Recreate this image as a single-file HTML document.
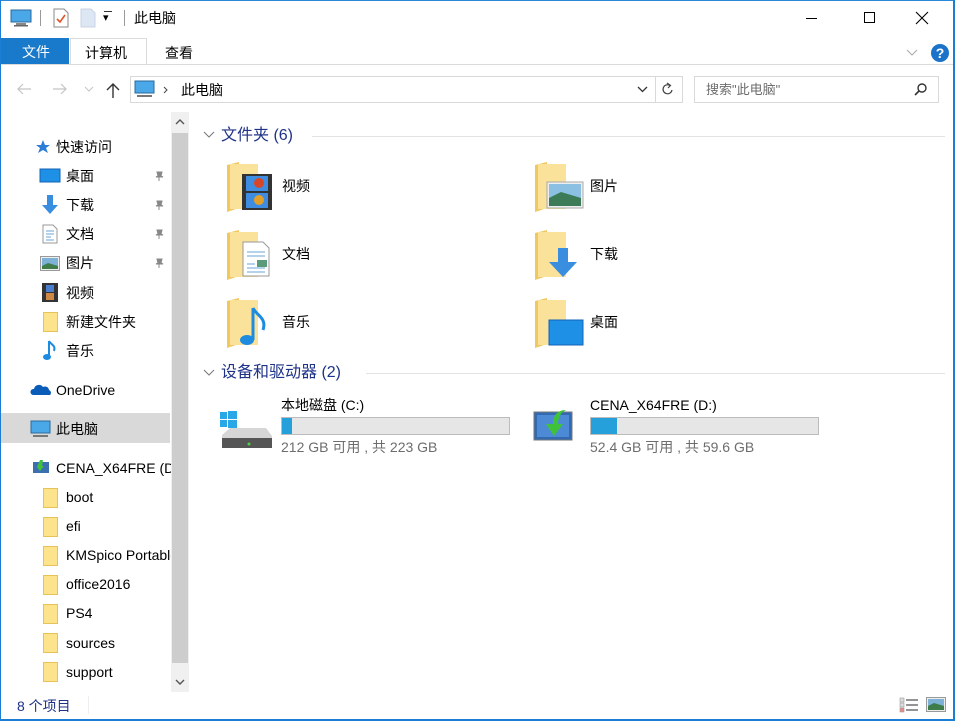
<!DOCTYPE html>
<html><head><meta charset="utf-8">
<style>
*{margin:0;padding:0;box-sizing:border-box}
html,body{width:955px;height:721px;overflow:hidden;background:#fff;font-family:"Liberation Sans","Noto Sans CJK SC",sans-serif;color:#000}
.a{position:absolute}
.t{font-size:14px;line-height:18px;white-space:nowrap}
.nav .t{font-size:14px}
.pin{width:10px;height:10px}
</style></head><body>
<div class="a" style="left:0;top:0;width:955px;height:721px;border:1px solid #2b88d8"></div>
<div class="a" style="left:0;top:0;width:1px;height:721px;background:#1a7fd4"></div>
<div class="a" style="left:0;top:719px;width:955px;height:2px;background:#1a7fd4"></div>
<div class="a" style="left:953px;top:0;width:2px;height:721px;background:#1a7fd4"></div>

<svg class="a" style="left:10px;top:9px" width="22" height="18"><rect x="1" y="1" width="20" height="12" fill="#4aa8e8" stroke="#2a6a9c"/><rect x="6" y="14" width="10" height="2" fill="#888"/><rect x="4" y="16" width="14" height="1.5" fill="#666"/></svg>
<div class="a" style="left:40px;top:10px;width:1px;height:16px;background:#999"></div>
<svg class="a" style="left:53px;top:8px" width="16" height="20"><path d="M1 1h10l4 4v14H1z" fill="#fff" stroke="#888"/><path d="M4 11l3 3 5-7" fill="none" stroke="#e2532a" stroke-width="1.6"/></svg>
<svg class="a" style="left:80px;top:8px" width="16" height="20"><path d="M1 1h10l4 4v14H1z" fill="#dde6f3" stroke="#c8d3e4"/></svg>
<div class="a t" style="left:103px;top:9px;font-size:11px">▾</div>
<div class="a" style="left:104px;top:11px;width:8px;height:1px;background:#333"></div>
<div class="a" style="left:124px;top:10px;width:1px;height:16px;background:#999"></div>
<div class="a t" style="left:134px;top:9px">此电脑</div>
<div class="a" style="left:806px;top:18px;width:11px;height:1px;background:#000"></div>
<div class="a" style="left:864px;top:12px;width:11px;height:11px;border:1px solid #000"></div>
<svg class="a" style="left:915px;top:11px" width="14" height="14"><path d="M1 1L13 13M13 1L1 13" stroke="#000" stroke-width="1.1"/></svg>

<div class="a" style="left:1px;top:38px;width:68px;height:26px;background:#1979ca"></div>
<div class="a t" style="left:22px;top:43px;color:#fff">文件</div>
<div class="a" style="left:70px;top:38px;width:77px;height:27px;border:1px solid #dadbdc;border-bottom:none;background:#fff"></div>
<div class="a t" style="left:85px;top:44px">计算机</div>
<div class="a t" style="left:165px;top:44px">查看</div>
<div class="a" style="left:1px;top:64px;width:952px;height:1px;background:#dadbdc"></div>
<svg class="a" style="left:906px;top:49px" width="12" height="8"><path d="M1 1l5 5 5-5" fill="none" stroke="#aaa"/></svg>
<div class="a" style="left:931px;top:44px;width:18px;height:18px;border-radius:50%;background:#1a73c8;color:#fff;font-weight:bold;font-size:14px;text-align:center;line-height:18px">?</div>

<svg class="a" style="left:16px;top:82px" width="16" height="14"><path d="M15 7H2M7 2L2 7l5 5" fill="none" stroke="#c4c4c4" stroke-width="1.2"/></svg>
<svg class="a" style="left:52px;top:82px" width="16" height="14"><path d="M1 7h13M9 2l5 5-5 5" fill="none" stroke="#c4c4c4" stroke-width="1.2"/></svg>
<svg class="a" style="left:84px;top:86px" width="10" height="6"><path d="M1 1l4 4 4-4" fill="none" stroke="#c4c4c4"/></svg>
<svg class="a" style="left:106px;top:82px" width="14" height="16"><path d="M7 16V2M1 8l6-6 6 6" fill="none" stroke="#333" stroke-width="1.4"/></svg>
<div class="a" style="left:130px;top:76px;width:553px;height:27px;border:1px solid #d9d9d9"></div>
<div class="a" style="left:655px;top:77px;width:1px;height:25px;background:#d9d9d9"></div>
<svg class="a" style="left:134px;top:80px" width="22" height="18"><rect x="1" y="1" width="19" height="12" fill="#4aa8e8" stroke="#2a6a9c"/><rect x="3" y="15" width="15" height="2" fill="#777"/></svg>
<svg class="a" style="left:163px;top:86px" width="6" height="8"><path d="M1 1l3 3-3 3" fill="none" stroke="#444"/></svg>
<div class="a t" style="left:181px;top:81px">此电脑</div>
<svg class="a" style="left:637px;top:86px" width="11" height="7"><path d="M1 1l4.5 4.5L10 1" fill="none" stroke="#333" stroke-width="1.3"/></svg>
<svg class="a" style="left:661px;top:81px" width="14" height="16"><path d="M11 9a4.5 4.5 0 1 1-2-4.5" fill="none" stroke="#444" stroke-width="1.2"/><path d="M6 2l3.5 2.5L7 7" fill="none" stroke="#444" stroke-width="1.2"/></svg>
<div class="a" style="left:694px;top:76px;width:245px;height:27px;border:1px solid #d9d9d9"></div>
<div class="a t" style="left:706px;top:81px;color:#6d6d6d;font-size:13px">搜索"此电脑"</div>
<svg class="a" style="left:914px;top:82px" width="14" height="14"><circle cx="8" cy="6" r="4" fill="none" stroke="#333" stroke-width="1.4"/><path d="M5 9L1 13" stroke="#333" stroke-width="1.6"/></svg>

<div class="a" style="left:1px;top:413px;width:169px;height:30px;background:#d9d9d9"></div>
<div class="a" style="left:171px;top:112px;width:18px;height:580px;background:#f0f0f0"></div>
<div class="a" style="left:172px;top:133px;width:16px;height:530px;background:#cdcdcd"></div>
<svg class="a" style="left:175px;top:119px" width="10" height="6"><path d="M1 5l4-4 4 4" fill="none" stroke="#555" stroke-width="1.4"/></svg>
<svg class="a" style="left:175px;top:679px" width="10" height="6"><path d="M1 1l4 4 4-4" fill="none" stroke="#555" stroke-width="1.4"/></svg>

<div class="nav">
<svg class="a" style="left:33px;top:139px" width="18" height="16"><path d="M10 1l2 5h5l-4 3 2 5-5-3-5 3 2-5-4-3h5z" fill="#2b7dd6"/></svg>
<div class="a t" style="left:56px;top:138px">快速访问</div>
<svg class="a" style="left:39px;top:168px" width="22" height="16"><rect x="1" y="1" width="20" height="13" fill="#1e90e6" stroke="#1363b5"/></svg>
<div class="a t" style="left:66px;top:167px">桌面</div>
<svg class="a" style="left:40px;top:194px" width="20" height="22"><path d="M7 1h6v10h5l-8 9-8-9h5z" fill="#3a8ee0"/></svg>
<div class="a t" style="left:66px;top:196px">下载</div>
<svg class="a" style="left:42px;top:224px" width="16" height="20"><path d="M1 1h10l4 4v14H1z" fill="#fff" stroke="#999"/><path d="M4 7h8M4 10h8M4 13h5M4 16h8" stroke="#6aa6d8"/></svg>
<div class="a t" style="left:66px;top:225px">文档</div>
<svg class="a" style="left:40px;top:256px" width="20" height="16"><rect x="0.5" y="0.5" width="19" height="14" fill="#eee" stroke="#999"/><rect x="2" y="2" width="16" height="11" fill="#7eb1d6"/><path d="M2 10l6-3 10 3v3H2z" fill="#3f7c4a"/></svg>
<div class="a t" style="left:66px;top:254px">图片</div>
<svg class="a" style="left:42px;top:283px" width="16" height="19"><rect x="0" y="0" width="16" height="19" fill="#333"/><rect x="4" y="2" width="8" height="7" fill="#4a7fd0"/><rect x="4" y="10" width="8" height="7" fill="#c84"/></svg>
<div class="a t" style="left:66px;top:284px">视频</div>
<div class="a" style="left:43px;top:312px;width:15px;height:20px;background:#fde38c;border:1px solid #e6c25a"></div>
<div class="a t" style="left:66px;top:313px">新建文件夹</div>
<svg class="a" style="left:43px;top:340px" width="14" height="22"><path d="M6 1v15" stroke="#1d8ce0" stroke-width="2"/><ellipse cx="4" cy="17" rx="4" ry="3" fill="#1d8ce0"/><path d="M6 1c2 4 7 4 5 10" fill="none" stroke="#1d8ce0" stroke-width="2"/></svg>
<div class="a t" style="left:66px;top:342px">音乐</div>

<svg class="pin a" style="left:154px;top:171px"><path d="M3 1h5l-1 4 2 1H2l2-1zM5 6v4" fill="#888" stroke="#888"/></svg>
<svg class="pin a" style="left:154px;top:200px"><path d="M3 1h5l-1 4 2 1H2l2-1zM5 6v4" fill="#888" stroke="#888"/></svg>
<svg class="pin a" style="left:154px;top:229px"><path d="M3 1h5l-1 4 2 1H2l2-1zM5 6v4" fill="#888" stroke="#888"/></svg>
<svg class="pin a" style="left:154px;top:258px"><path d="M3 1h5l-1 4 2 1H2l2-1zM5 6v4" fill="#888" stroke="#888"/></svg>

<svg class="a" style="left:30px;top:382px" width="22" height="14"><path d="M3 13a3 3 0 0 1 1-6 5 5 0 0 1 9-2 4 4 0 0 1 6 3 3 3 0 0 1 1 5z" fill="#0b5cb8"/></svg>
<div class="a t" style="left:56px;top:381px">OneDrive</div>
<svg class="a" style="left:30px;top:420px" width="22" height="18"><rect x="1" y="1" width="19" height="12" fill="#4aa8e8" stroke="#2a6a9c"/><rect x="3" y="15" width="15" height="2" fill="#777"/></svg>
<div class="a t" style="left:56px;top:420px">此电脑</div>
<svg class="a" style="left:32px;top:458px" width="18" height="16"><rect x="1" y="4" width="16" height="11" fill="#3a6fb0"/><path d="M5 9l3 4 4-5-2 0 1-6-3 0z" fill="#3fc23a"/></svg>
<div class="a t" style="left:56px;top:459px;width:115px;overflow:hidden">CENA_X64FRE (D:)</div>
<div class="a" style="left:43px;top:488px;width:15px;height:20px;background:#fde38c;border:1px solid #e6c25a"></div><div class="a t" style="left:66px;top:488px">boot</div>
<div class="a" style="left:43px;top:517px;width:15px;height:20px;background:#fde38c;border:1px solid #e6c25a"></div><div class="a t" style="left:66px;top:517px">efi</div>
<div class="a" style="left:43px;top:546px;width:15px;height:20px;background:#fde38c;border:1px solid #e6c25a"></div><div class="a t" style="left:66px;top:546px;width:105px;overflow:hidden">KMSpico Portable</div>
<div class="a" style="left:43px;top:575px;width:15px;height:20px;background:#fde38c;border:1px solid #e6c25a"></div><div class="a t" style="left:66px;top:575px">office2016</div>
<div class="a" style="left:43px;top:604px;width:15px;height:20px;background:#fde38c;border:1px solid #e6c25a"></div><div class="a t" style="left:66px;top:604px">PS4</div>
<div class="a" style="left:43px;top:633px;width:15px;height:20px;background:#fde38c;border:1px solid #e6c25a"></div><div class="a t" style="left:66px;top:634px">sources</div>
<div class="a" style="left:43px;top:662px;width:15px;height:20px;background:#fde38c;border:1px solid #e6c25a"></div><div class="a t" style="left:66px;top:663px">support</div>
</div>

<svg class="a" style="left:203px;top:131px" width="12" height="8"><path d="M1 1l5 5 5-5" fill="none" stroke="#777"/></svg>
<div class="a t" style="left:221px;top:126px;font-size:16px;line-height:20px;color:#1e3287">文件夹 (6)</div>
<div class="a" style="left:312px;top:136px;width:633px;height:1px;background:#e3e3e3"></div>

<svg class="a" style="left:227px;top:162px" width="48" height="50"><path d="M0 3l12-3v46l-12 4z" fill="#f1c75f"/><path d="M3 2h28v45H3z" fill="#fbe29a"/><rect x="15" y="12" width="30" height="36" fill="#333"/><rect x="19" y="14" width="22" height="15" fill="#3f8de0"/><rect x="19" y="31" width="22" height="15" fill="#3f8de0"/><circle cx="32" cy="21" r="5" fill="#d8462a"/><circle cx="32" cy="38" r="5" fill="#e3a12a"/></svg>
<div class="a t" style="left:282px;top:177px">视频</div>
<svg class="a" style="left:535px;top:162px" width="50" height="50"><path d="M0 3l12-3v46l-12 4z" fill="#f1c75f"/><path d="M3 2h28v45H3z" fill="#fbe29a"/><rect x="12" y="20" width="36" height="26" fill="#eee" stroke="#aaa"/><rect x="14" y="22" width="32" height="22" fill="#8cc0e3"/><path d="M14 36l12-6 20 6v8H14z" fill="#3c7a58"/></svg>
<div class="a t" style="left:590px;top:177px">图片</div>
<svg class="a" style="left:227px;top:230px" width="48" height="50"><path d="M0 3l12-3v46l-12 4z" fill="#f1c75f"/><path d="M3 2h28v45H3z" fill="#fbe29a"/><path d="M16 12h20l6 6v28H16z" fill="#fff" stroke="#999"/><path d="M20 22h18M20 26h18M20 34h8M20 38h18M20 42h18" stroke="#6aa6d8"/><rect x="30" y="30" width="10" height="7" fill="#5a9b7c"/></svg>
<div class="a t" style="left:282px;top:245px">文档</div>
<svg class="a" style="left:535px;top:230px" width="50" height="50"><path d="M0 3l12-3v46l-12 4z" fill="#f1c75f"/><path d="M3 2h28v45H3z" fill="#fbe29a"/><path d="M23 18h10v14h9l-14 15-14-15h9z" fill="#3a8ee0"/></svg>
<div class="a t" style="left:590px;top:245px">下载</div>
<svg class="a" style="left:227px;top:298px" width="48" height="50"><path d="M0 3l12-3v46l-12 4z" fill="#f1c75f"/><path d="M3 2h28v45H3z" fill="#fbe29a"/><path d="M26 10v32" stroke="#1d8ce0" stroke-width="3"/><ellipse cx="20" cy="42" rx="7" ry="5" fill="#1d8ce0"/><path d="M26 10c4 8 14 10 10 22" fill="none" stroke="#1d8ce0" stroke-width="3"/></svg>
<div class="a t" style="left:282px;top:313px">音乐</div>
<svg class="a" style="left:535px;top:298px" width="50" height="50"><path d="M0 3l12-3v46l-12 4z" fill="#f1c75f"/><path d="M3 2h28v45H3z" fill="#fbe29a"/><rect x="14" y="22" width="34" height="25" fill="#1e90e6" stroke="#1363b5"/></svg>
<div class="a t" style="left:590px;top:313px">桌面</div>

<svg class="a" style="left:203px;top:369px" width="12" height="8"><path d="M1 1l5 5 5-5" fill="none" stroke="#777"/></svg>
<div class="a t" style="left:221px;top:363px;font-size:16px;line-height:20px;color:#1e3287">设备和驱动器 (2)</div>
<div class="a" style="left:366px;top:373px;width:579px;height:1px;background:#e3e3e3"></div>

<svg class="a" style="left:218px;top:410px" width="56" height="42"><rect x="2" y="2" width="7" height="7" fill="#2aa7e6"/><rect x="10" y="1" width="9" height="8" fill="#2aa7e6"/><rect x="2" y="10" width="7" height="7" fill="#2aa7e6"/><rect x="10" y="10" width="9" height="8" fill="#2aa7e6"/><path d="M4 25l8-7h36l6 8v12H4z" fill="#d6d6d6"/><path d="M4 28h50v10H4z" fill="#555"/><circle cx="31" cy="34" r="1.5" fill="#4ed04e"/></svg>
<div class="a t" style="left:281px;top:396px">本地磁盘 (C:)</div>
<div class="a" style="left:281px;top:417px;width:229px;height:18px;background:#e6e6e6;border:1px solid #bcbcbc"></div>
<div class="a" style="left:282px;top:418px;width:10px;height:16px;background:#26a0da"></div>
<div class="a t" style="left:281px;top:438px;color:#6d6d6d">212 GB 可用 , 共 223 GB</div>

<svg class="a" style="left:532px;top:402px" width="44" height="40"><rect x="2" y="10" width="38" height="28" fill="#3269b0" stroke="#777"/><rect x="5" y="13" width="32" height="22" fill="#4d8ad6"/><path d="M14 22l8 12 9-12h-5c0-8 4-12 8-14-7 0-13 4-13 14z" fill="#3fc23a"/></svg>
<div class="a t" style="left:590px;top:396px">CENA_X64FRE (D:)</div>
<div class="a" style="left:590px;top:417px;width:229px;height:18px;background:#e6e6e6;border:1px solid #bcbcbc"></div>
<div class="a" style="left:591px;top:418px;width:26px;height:16px;background:#26a0da"></div>
<div class="a t" style="left:590px;top:438px;color:#6d6d6d">52.4 GB 可用 , 共 59.6 GB</div>

<div class="a t" style="left:17px;top:697px;color:#1e3287;font-size:14px">8 个项目</div>
<div class="a" style="left:88px;top:696px;width:1px;height:18px;background:#eee"></div>
<svg class="a" style="left:899px;top:697px" width="20" height="16"><rect x="1" y="1" width="4" height="4" fill="#ddd" stroke="#999" stroke-width=".6"/><rect x="1" y="6" width="4" height="4" fill="#ddd" stroke="#999" stroke-width=".6"/><rect x="1" y="11" width="4" height="4" fill="#e88" stroke="#999" stroke-width=".6"/><path d="M7 3h12M7 8h12M7 13h12" stroke="#555" stroke-width="1.2"/></svg>
<svg class="a" style="left:926px;top:697px" width="20" height="16"><rect x="0.5" y="0.5" width="19" height="14" fill="#eee" stroke="#999"/><rect x="2" y="2" width="16" height="11" fill="#7eb1d6"/><path d="M2 9l6-3 10 3v4H2z" fill="#3f7c4a"/></svg>
</body></html>
